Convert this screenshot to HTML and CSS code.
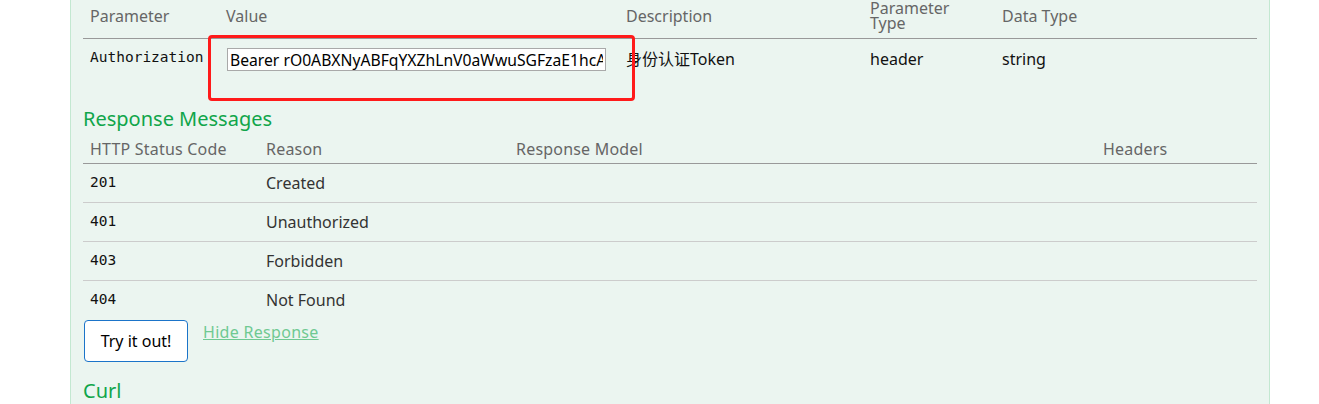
FILE: index.html
```html
<!DOCTYPE html>
<html>
<head>
<meta charset="utf-8">
<link rel="stylesheet" href="styles.css">
</head>
<body>
<div class="panel">
  <table class="params">
    <colgroup>
      <col class="c-param"><col class="c-value"><col class="c-desc"><col class="c-ptype"><col class="c-dtype">
    </colgroup>
    <thead>
      <tr>
        <th>Parameter</th>
        <th>Value</th>
        <th>Description</th>
        <th class="two-line"><span class="line">Parameter</span><span class="line">Type</span></th>
        <th>Data Type</th>
      </tr>
    </thead>
    <tbody>
      <tr>
        <td class="code">Authorization</td>
        <td class="value-cell">
          <input class="param-input" type="text" value="Bearer rO0ABXNyABFqYXZhLnV0aWwuSGFzaE1hcAUH2sHDFmDRAwACRgAKbG9hZEZhY3Rvcg">
          <span class="annot"></span>
        </td>
        <td class="dark">身份认证Token</td>
        <td class="dark">header</td>
        <td class="dark">string</td>
      </tr>
    </tbody>
  </table>

  <h4 class="section-title">Response Messages</h4>
  <table class="responses">
    <colgroup>
      <col class="c-code"><col class="c-reason"><col class="c-model"><col class="c-headers">
    </colgroup>
    <thead>
      <tr>
        <th>HTTP Status Code</th>
        <th>Reason</th>
        <th>Response Model</th>
        <th>Headers</th>
      </tr>
    </thead>
    <tbody>
      <tr><td class="code">201</td><td>Created</td><td></td><td></td></tr>
      <tr><td class="code">401</td><td>Unauthorized</td><td></td><td></td></tr>
      <tr><td class="code">403</td><td>Forbidden</td><td></td><td></td></tr>
      <tr><td class="code">404</td><td>Not Found</td><td></td><td></td></tr>
    </tbody>
  </table>

  <div class="sandbox">
    <button class="try-btn" type="button">Try it out!</button>
    <a class="hide-link" href="#">Hide Response</a>
  </div>

  <h4 class="section-title curl">Curl</h4>
</div>
</body>
</html>
```

FILE: styles.css
```css
html, body {
  margin: 0;
  padding: 0;
  background: #ffffff;
}

body {
  font-family: "Noto Sans", "Noto Sans CJK SC", sans-serif;
  font-size: 16px;
  color: #333333;
  height: 404px;
  overflow: hidden;
}

.panel {
  margin-left: 70px;
  width: 1200px;
  box-sizing: border-box;
  min-height: 420px;
  background: #ebf5f0;
  border-left: 1px solid #c3e8d1;
  border-right: 1px solid #c3e8d1;
  padding: 0 12px;
}

table {
  border-collapse: collapse;
  width: 100%;
  table-layout: fixed;
}

th {
  text-align: left;
  font-weight: normal;
  color: #666666;
  font-size: 16px;
  border-bottom: 1px solid #999999;
}

td {
  text-align: left;
  vertical-align: top;
  font-size: 16px;
}

.code {
  font-family: "DejaVu Sans Mono", "Liberation Mono", monospace;
  font-size: 14.5px;
  color: #111111;
}

.dark {
  color: #111111;
}

/* parameters table */
.params .c-param { width: 136px; }
.params .c-value { width: 400px; }
.params .c-desc { width: 244px; }
.params .c-ptype { width: 132px; }
.params .c-dtype { width: auto; }

.params th {
  padding: 0 7px 6px;
  line-height: 16px;
  height: 32px;
  vertical-align: middle;
}

.params th.two-line .line {
  display: block;
  line-height: 15px;
}

.params td {
  padding: 9px 7px 9px;
  line-height: 20px;
}

.params td.code {
  padding-top: 8px;
}

.params td.dark {
  padding-top: 10px;
}

.value-cell {
  position: relative;
}

.param-input {
  display: block;
  box-sizing: border-box;
  width: 379px;
  height: 23px;
  margin: 0 0 0 1px;
  padding: 0 2px;
  border: 1px solid #a9a9a9;
  background: #ffffff;
  font-family: "Noto Sans", "Noto Sans CJK SC", sans-serif;
  font-size: 15.7px;
  color: #000000;
  outline: none;
}

/* red annotation overlay */
.annot {
  position: absolute;
  left: -11px;
  top: -4px;
  width: 427px;
  height: 66px;
  box-sizing: border-box;
  border: 3px solid #ff1a1a;
  border-radius: 4px;
  pointer-events: none;
}

/* headings */
.section-title {
  margin: 27px 0 0;
  font-size: 20px;
  line-height: 24px;
  font-weight: normal;
  color: #10a54a;
}

/* responses table */
.responses .c-code { width: 176px; }
.responses .c-reason { width: 250px; }
.responses .c-model { width: 587px; }
.responses .c-headers { width: auto; }

.responses th {
  padding: 8px 7px 4px;
  line-height: 20px;
  letter-spacing: 0.2px;
}

.responses td {
  padding: 9px 7px;
  line-height: 20px;
  border-bottom: 1px solid #cccccc;
}

.responses tbody tr:last-child td {
  border-bottom: none;
}

.responses td.code {
  padding-top: 8px;
  padding-bottom: 10px;
}

/* sandbox */
.sandbox {
  display: flex;
  align-items: flex-start;
  gap: 15px;
  margin-top: 1px;
}

.try-btn {
  box-sizing: border-box;
  width: 104px;
  height: 42px;
  margin-left: 1px;
  background: #ffffff;
  border: 1px solid #1b74c9;
  border-radius: 4px;
  font-family: "Noto Sans", "Noto Sans CJK SC", sans-serif;
  font-size: 16px;
  color: #000000;
  padding: 0;
}

.hide-link {
  color: #6fc992;
  text-decoration: underline;
  font-size: 16px;
  line-height: 22px;
  letter-spacing: 0.3px;
  margin-top: 1px;
}

.curl {
  margin-top: 17px;
}
```
